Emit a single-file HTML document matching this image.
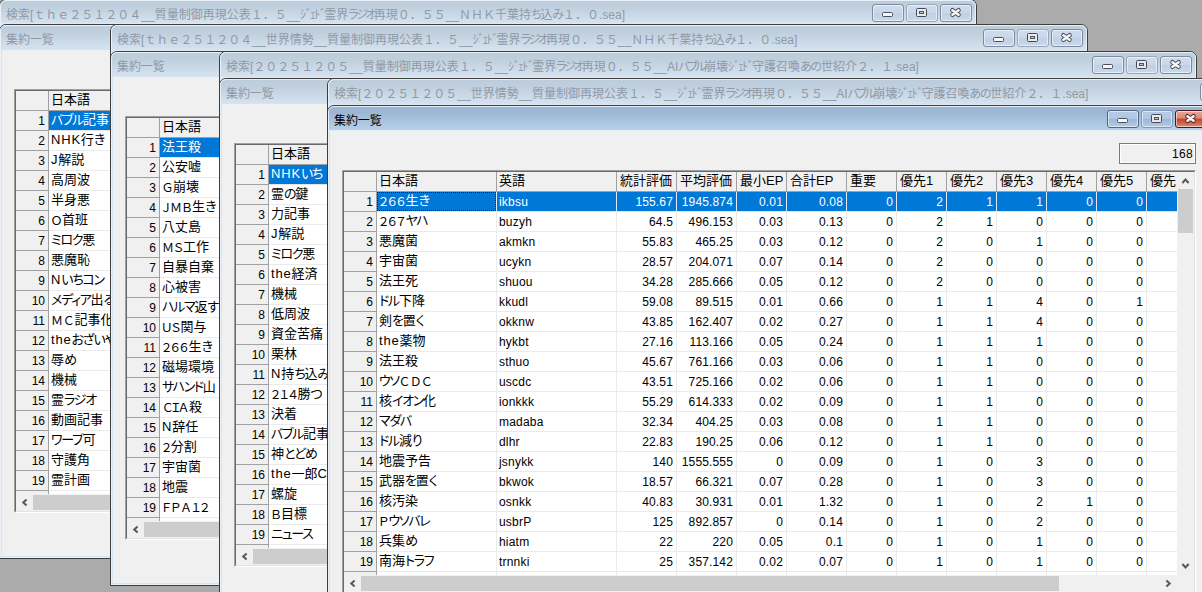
<!DOCTYPE html>
<html lang="ja"><head><meta charset="utf-8"><title>検索</title>
<style>
*{box-sizing:border-box;margin:0;padding:0}
html,body{width:1202px;height:592px;overflow:hidden}
body{background:#ababab;position:relative;font-family:"Liberation Sans","Noto Sans CJK JP",sans-serif;font-size:12px;color:#000}
.win{position:absolute;width:978px;border:1px solid #3d3d3d;border-radius:7px 7px 0 0;background:#d7e4f2;overflow:hidden}
.win .hl{position:absolute;left:0;top:0;right:0;bottom:0;border:1px solid #eaf0f8;border-radius:6px 6px 0 0;pointer-events:none}
.cap{position:absolute;left:0;right:0;top:0;background:linear-gradient(#bdccdb,#c0cfdd 30%,#d6e4f1);box-shadow:inset 0 -1px 0 #dfe9f4}
.cap .t{position:absolute;left:6px;white-space:nowrap;color:#9099a6;font-size:12px;line-height:16px}
.inner{position:absolute;left:-1px;right:-1px;bottom:-1px;border:1px solid #3d3d3d;border-radius:7px 7px 0 0;background:#d7e4f2;overflow:hidden}
.inner .cap2{position:absolute;left:0;right:0;top:0;height:25px;background:linear-gradient(#bdccdb,#c0cfdd 30%,#d6e4f1)}
.inner.act .cap2{background:linear-gradient(#9ab5d3,#9cb7d5 25%,#b9d2eb);box-shadow:inset 0 -1px 0 #e2ebf5}
.inner .cap2 .t{position:absolute;left:6px;top:7px;letter-spacing:-.1px;white-space:nowrap;color:#9099a6;font-size:12px;line-height:16px}
.inner.act .cap2 .t{color:#000}
.inner .cl{position:absolute;left:2px;right:2px;top:25px;bottom:2px;background:#f0f0f0}
.btn{position:absolute;width:32px;height:18px;border:1px solid #7d8aa0;border-radius:3px;background:linear-gradient(#cfdceb,#c9d7e8 50%,#c0d0e4 50%,#c9d8ea);box-shadow:inset 0 0 0 1px rgba(255,255,255,.55)}
.btn svg{position:absolute;left:-1px;top:-1px}
.btn.max{border-color:#9aa6b9}
.act .btn.max{border-color:#7f97b8}
.act .btn{border-color:#56657d;background:linear-gradient(#b7cce6,#afc6e2 50%,#9bb7d8 50%,#b3cbe6)}
.act .btn.x{border-color:#4a1a1a;background:linear-gradient(#e9a99b,#dc8573 45%,#c3452d 50%,#cf6a4f 80%,#dd907a)}
.grid{position:absolute;border-style:solid;border-width:2px;border-color:#a0a0a0 #fff #fff #a0a0a0;background:#fff;font-family:"Liberation Sans","Noto Sans CJK JP",sans-serif;font-size:13px}
.grid .in{position:absolute;left:-1px;top:-1px;right:-1px;bottom:-1px;border-style:solid;border-width:1px;border-color:#696969 #e3e3e3 #e3e3e3 #696969;overflow:hidden;background:#fff}
.r{position:absolute;left:0;height:20px;white-space:nowrap}
.c{position:absolute;top:0;height:20px;border-right:1px solid #ebebeb;border-bottom:1px solid #ebebeb;line-height:17px;padding:0 3px 0 2px;overflow:hidden;white-space:nowrap}
.c.n{text-align:right;padding-right:3px;font-size:12px;line-height:21px;letter-spacing:.15px}
.c.e{font-size:12px;line-height:21px;letter-spacing:.2px;padding-left:2px}
.h .c{background:#f0f0f0;border-right-color:#a0a0a0;border-bottom-color:#a0a0a0;line-height:18px}
.c.rh{background:#f0f0f0;border-right-color:#a0a0a0;border-bottom-color:#a0a0a0;text-align:right;padding-right:3px;font-size:12px;line-height:21px}
.sel .c{background:#0078d7;color:#fff;border-right-color:#dfeaf6;border-bottom-color:#e4e4e4}
.sel .c.rh{background:#f0f0f0;color:#000;border-right-color:#a0a0a0;border-bottom-color:#a0a0a0}
.foc:after{content:"";position:absolute;left:0;top:0;right:0;bottom:0;border:1px dotted #10243a}
.hs{position:absolute;left:0;height:17px;background:#f0f0f0}
.hs .th{position:absolute;top:1px;height:15px;background:#cdcdcd}
.vs{position:absolute;width:17px;background:#f0f0f0}
.vs .th{position:absolute;left:1px;width:15px;background:#cdcdcd}
.arr{position:absolute}
.kn{font-feature-settings:"palt";letter-spacing:-1.3px}
.fw{font-size:12px;position:relative;top:.5px}
.as{letter-spacing:.8px}
.tk{font-feature-settings:"palt";letter-spacing:-2.5px}
.th{font-feature-settings:"palt";letter-spacing:-1.2px}
.hk{letter-spacing:-1.95px}
.tb{position:absolute;border:1px solid #7a7a7a;background:#f0f0f0;box-shadow:inset 0 0 0 1px #fff;font-size:12px;text-align:right;line-height:21px;padding-right:2px;letter-spacing:.3px}
</style></head>
<body>
<div class="win" style="left:-1px;top:-1px;height:560px"><div class="cap" style="height:24px"><div class="t" style="top:7px">検索[ｔｈｅ２５１２０４__質量制御再現公表１．５__<span class="hk">ｼﾞｪﾄﾞ</span>霊界<span class="tk">ラジオ</span>再現０．５５__ＮＨＫ千葉持<span class="th">ち</span>込<span class="th">み</span>１．０.sea]</div></div><div class="btn min" style="left:872px;top:4px"><svg width="32" height="18" viewBox="0 0 32 18"><rect x="10.5" y="8.5" width="10" height="4" rx="1" fill="#f6f6f6" stroke="#4a505c"/></svg></div><div class="btn max" style="left:906px;top:4px"><svg width="32" height="18" viewBox="0 0 32 18"><rect x="10.5" y="4.5" width="10" height="8" rx="1" fill="#e9e9e9" stroke="#444a55"/><rect x="13.5" y="7.5" width="4" height="2" fill="#b9c9df" stroke="#4d5563"/></svg></div><div class="btn x" style="left:940px;top:4px"><svg width="32" height="18" viewBox="0 0 32 18"><path d="M12.4 6.2L18.6 10.8M18.6 6.2L12.4 10.8" fill="none" stroke="#4b505b" stroke-width="4.4" stroke-linecap="round"/><path d="M12.4 6.2L18.6 10.8M18.6 6.2L12.4 10.8" fill="none" stroke="#f8f8f8" stroke-width="2.5" stroke-linecap="round"/></svg></div><div class="hl"></div><div class="inner" style="top:24px"><div class="cap2"><div class="t">集約一覧</div></div><div class="cl"></div><div class="hl"></div><div class="grid" style="left:14px;top:64px;width:300px;height:424px"><div class="in"><div class="r h" style="top:0"><div class="c" style="left:0;width:33px"></div><div class="c" style="left:33px;width:120px">日本語</div><div class="c" style="left:153px;width:120px">英語</div></div><div class="r sel" style="top:20px"><div class="c rh" style="left:0;width:33px">1</div><div class="c" style="left:33px;width:120px"><span class="kn">バブル</span>記事</div><div class="c e" style="left:153px;width:120px"></div></div><div class="r" style="top:40px"><div class="c rh" style="left:0;width:33px">2</div><div class="c" style="left:33px;width:120px"><span class="as">NHK</span>行<span class="kn">き</span></div><div class="c e" style="left:153px;width:120px"></div></div><div class="r" style="top:60px"><div class="c rh" style="left:0;width:33px">3</div><div class="c" style="left:33px;width:120px"><span class="as">J</span>解説</div><div class="c e" style="left:153px;width:120px"></div></div><div class="r" style="top:80px"><div class="c rh" style="left:0;width:33px">4</div><div class="c" style="left:33px;width:120px">高周波</div><div class="c e" style="left:153px;width:120px"></div></div><div class="r" style="top:100px"><div class="c rh" style="left:0;width:33px">5</div><div class="c" style="left:33px;width:120px">半身悪</div><div class="c e" style="left:153px;width:120px"></div></div><div class="r" style="top:120px"><div class="c rh" style="left:0;width:33px">6</div><div class="c" style="left:33px;width:120px"><span class="fw" style="margin:0 -0.5px">Ｏ</span>首班</div><div class="c e" style="left:153px;width:120px"></div></div><div class="r" style="top:140px"><div class="c rh" style="left:0;width:33px">7</div><div class="c" style="left:33px;width:120px"><span class="kn">ミロク</span>悪</div><div class="c e" style="left:153px;width:120px"></div></div><div class="r" style="top:160px"><div class="c rh" style="left:0;width:33px">8</div><div class="c" style="left:33px;width:120px">悪魔恥</div><div class="c e" style="left:153px;width:120px"></div></div><div class="r" style="top:180px"><div class="c rh" style="left:0;width:33px">9</div><div class="c" style="left:33px;width:120px"><span class="as">N</span><span class="kn">いちコン</span></div><div class="c e" style="left:153px;width:120px"></div></div><div class="r" style="top:200px"><div class="c rh" style="left:0;width:33px">10</div><div class="c" style="left:33px;width:120px"><span class="kn">メディア</span>出<span class="kn">る</span></div><div class="c e" style="left:153px;width:120px"></div></div><div class="r" style="top:220px"><div class="c rh" style="left:0;width:33px">11</div><div class="c" style="left:33px;width:120px"><span class="fw" style="margin:0 0px">Ｍ</span><span class="fw" style="margin:0 -0.25px">Ｃ</span>記事化</div><div class="c e" style="left:153px;width:120px"></div></div><div class="r" style="top:240px"><div class="c rh" style="left:0;width:33px">12</div><div class="c" style="left:33px;width:120px"><span class="as">the</span><span class="kn">おざいや</span></div><div class="c e" style="left:153px;width:120px"></div></div><div class="r" style="top:260px"><div class="c rh" style="left:0;width:33px">13</div><div class="c" style="left:33px;width:120px">辱<span class="kn">め</span></div><div class="c e" style="left:153px;width:120px"></div></div><div class="r" style="top:280px"><div class="c rh" style="left:0;width:33px">14</div><div class="c" style="left:33px;width:120px">機械</div><div class="c e" style="left:153px;width:120px"></div></div><div class="r" style="top:300px"><div class="c rh" style="left:0;width:33px">15</div><div class="c" style="left:33px;width:120px">霊<span class="kn">ラジオ</span></div><div class="c e" style="left:153px;width:120px"></div></div><div class="r" style="top:320px"><div class="c rh" style="left:0;width:33px">16</div><div class="c" style="left:33px;width:120px">動画記事</div><div class="c e" style="left:153px;width:120px"></div></div><div class="r" style="top:340px"><div class="c rh" style="left:0;width:33px">17</div><div class="c" style="left:33px;width:120px"><span class="kn">ワープ</span>可</div><div class="c e" style="left:153px;width:120px"></div></div><div class="r" style="top:360px"><div class="c rh" style="left:0;width:33px">18</div><div class="c" style="left:33px;width:120px">守護角</div><div class="c e" style="left:153px;width:120px"></div></div><div class="r" style="top:380px"><div class="c rh" style="left:0;width:33px">19</div><div class="c" style="left:33px;width:120px">霊計画</div><div class="c e" style="left:153px;width:120px"></div></div><div class="r" style="top:400px"><div class="c rh" style="left:0;width:33px"></div><div class="c" style="left:33px;width:120px"></div><div class="c e" style="left:153px;width:120px"></div></div><div class="hs" style="top:403px;width:296px"><svg class="arr" style="left:0px;top:0px" width="17" height="17" viewBox="0 0 17 17"><path d="M10.6 5.5 L7.3 8.5 L10.6 11.5" fill="none" stroke="#5a5a5a" stroke-width="2.1"/></svg><div class="th" style="left:17px;width:200px"></div></div></div></div></div></div>
<div class="win" style="left:110px;top:24px;height:562px"><div class="cap" style="height:26px"><div class="t" style="top:7px">検索[ｔｈｅ２５１２０４__世界情勢__質量制御再現公表１．５__<span class="hk">ｼﾞｪﾄﾞ</span>霊界<span class="tk">ラジオ</span>再現０．５５__ＮＨＫ千葉持<span class="th">ち</span>込<span class="th">み</span>１．０.sea]</div></div><div class="btn min" style="left:872px;top:4px"><svg width="32" height="18" viewBox="0 0 32 18"><rect x="10.5" y="8.5" width="10" height="4" rx="1" fill="#f6f6f6" stroke="#4a505c"/></svg></div><div class="btn max" style="left:906px;top:4px"><svg width="32" height="18" viewBox="0 0 32 18"><rect x="10.5" y="4.5" width="10" height="8" rx="1" fill="#e9e9e9" stroke="#444a55"/><rect x="13.5" y="7.5" width="4" height="2" fill="#b9c9df" stroke="#4d5563"/></svg></div><div class="btn x" style="left:940px;top:4px"><svg width="32" height="18" viewBox="0 0 32 18"><path d="M12.4 6.2L18.6 10.8M18.6 6.2L12.4 10.8" fill="none" stroke="#4b505b" stroke-width="4.4" stroke-linecap="round"/><path d="M12.4 6.2L18.6 10.8M18.6 6.2L12.4 10.8" fill="none" stroke="#f8f8f8" stroke-width="2.5" stroke-linecap="round"/></svg></div><div class="hl"></div><div class="inner" style="top:26px"><div class="cap2"><div class="t">集約一覧</div></div><div class="cl"></div><div class="hl"></div><div class="grid" style="left:14px;top:64px;width:300px;height:424px"><div class="in"><div class="r h" style="top:0"><div class="c" style="left:0;width:33px"></div><div class="c" style="left:33px;width:120px">日本語</div><div class="c" style="left:153px;width:120px">英語</div></div><div class="r sel" style="top:20px"><div class="c rh" style="left:0;width:33px">1</div><div class="c" style="left:33px;width:120px">法王殺</div><div class="c e" style="left:153px;width:120px"></div></div><div class="r" style="top:40px"><div class="c rh" style="left:0;width:33px">2</div><div class="c" style="left:33px;width:120px">公安嘘</div><div class="c e" style="left:153px;width:120px"></div></div><div class="r" style="top:60px"><div class="c rh" style="left:0;width:33px">3</div><div class="c" style="left:33px;width:120px"><span class="fw" style="margin:0 -0.5px">Ｇ</span>崩壊</div><div class="c e" style="left:153px;width:120px"></div></div><div class="r" style="top:80px"><div class="c rh" style="left:0;width:33px">4</div><div class="c" style="left:33px;width:120px"><span class="fw" style="margin:0 -2px">Ｊ</span><span class="fw" style="margin:0 0px">Ｍ</span><span class="fw" style="margin:0 -1px">Ｂ</span>生<span class="kn">き</span></div><div class="c e" style="left:153px;width:120px"></div></div><div class="r" style="top:100px"><div class="c rh" style="left:0;width:33px">5</div><div class="c" style="left:33px;width:120px">八丈島</div><div class="c e" style="left:153px;width:120px"></div></div><div class="r" style="top:120px"><div class="c rh" style="left:0;width:33px">6</div><div class="c" style="left:33px;width:120px"><span class="fw" style="margin:0 0px">Ｍ</span><span class="fw" style="margin:0 -1.5px">Ｓ</span>工作</div><div class="c e" style="left:153px;width:120px"></div></div><div class="r" style="top:140px"><div class="c rh" style="left:0;width:33px">7</div><div class="c" style="left:33px;width:120px">自暴自棄</div><div class="c e" style="left:153px;width:120px"></div></div><div class="r" style="top:160px"><div class="c rh" style="left:0;width:33px">8</div><div class="c" style="left:33px;width:120px">心被害</div><div class="c e" style="left:153px;width:120px"></div></div><div class="r" style="top:180px"><div class="c rh" style="left:0;width:33px">9</div><div class="c" style="left:33px;width:120px"><span class="kn">ハルマ</span>返<span class="kn">す</span></div><div class="c e" style="left:153px;width:120px"></div></div><div class="r" style="top:200px"><div class="c rh" style="left:0;width:33px">10</div><div class="c" style="left:33px;width:120px"><span class="fw" style="margin:0 -1.25px">Ｕ</span><span class="fw" style="margin:0 -1.5px">Ｓ</span>関与</div><div class="c e" style="left:153px;width:120px"></div></div><div class="r" style="top:220px"><div class="c rh" style="left:0;width:33px">11</div><div class="c" style="left:33px;width:120px"><span class="fw" style="margin:0 -1.6px">２</span><span class="fw" style="margin:0 -1.6px">６</span><span class="fw" style="margin:0 -1.6px">６</span>生<span class="kn">き</span></div><div class="c e" style="left:153px;width:120px"></div></div><div class="r" style="top:240px"><div class="c rh" style="left:0;width:33px">12</div><div class="c" style="left:33px;width:120px">磁場環境</div><div class="c e" style="left:153px;width:120px"></div></div><div class="r" style="top:260px"><div class="c rh" style="left:0;width:33px">13</div><div class="c" style="left:33px;width:120px"><span class="kn">サハンド</span>山</div><div class="c e" style="left:153px;width:120px"></div></div><div class="r" style="top:280px"><div class="c rh" style="left:0;width:33px">14</div><div class="c" style="left:33px;width:120px"><span class="fw" style="margin:0 -0.25px">Ｃ</span><span class="fw" style="margin:0 -3.75px">Ｉ</span><span class="fw" style="margin:0 -0.5px">Ａ</span>殺</div><div class="c e" style="left:153px;width:120px"></div></div><div class="r" style="top:300px"><div class="c rh" style="left:0;width:33px">15</div><div class="c" style="left:33px;width:120px"><span class="as">N</span>辞任</div><div class="c e" style="left:153px;width:120px"></div></div><div class="r" style="top:320px"><div class="c rh" style="left:0;width:33px">16</div><div class="c" style="left:33px;width:120px"><span class="fw" style="margin:0 -1.6px">２</span>分割</div><div class="c e" style="left:153px;width:120px"></div></div><div class="r" style="top:340px"><div class="c rh" style="left:0;width:33px">17</div><div class="c" style="left:33px;width:120px">宇宙菌</div><div class="c e" style="left:153px;width:120px"></div></div><div class="r" style="top:360px"><div class="c rh" style="left:0;width:33px">18</div><div class="c" style="left:33px;width:120px">地震</div><div class="c e" style="left:153px;width:120px"></div></div><div class="r" style="top:380px"><div class="c rh" style="left:0;width:33px">19</div><div class="c" style="left:33px;width:120px"><span class="fw" style="margin:0 -1.5px">Ｆ</span><span class="fw" style="margin:0 -1.25px">Ｐ</span><span class="fw" style="margin:0 -0.5px">Ａ</span><span class="fw" style="margin:0 -1.6px">１</span><span class="fw" style="margin:0 -1.6px">２</span></div><div class="c e" style="left:153px;width:120px"></div></div><div class="r" style="top:400px"><div class="c rh" style="left:0;width:33px"></div><div class="c" style="left:33px;width:120px"></div><div class="c e" style="left:153px;width:120px"></div></div><div class="hs" style="top:403px;width:296px"><svg class="arr" style="left:0px;top:0px" width="17" height="17" viewBox="0 0 17 17"><path d="M10.6 5.5 L7.3 8.5 L10.6 11.5" fill="none" stroke="#5a5a5a" stroke-width="2.1"/></svg><div class="th" style="left:17px;width:200px"></div></div></div></div></div></div>
<div class="win" style="left:219px;top:51px;height:562px"><div class="cap" style="height:26px"><div class="t" style="top:7px">検索[２０２５１２０５__質量制御再現公表１．５__<span class="hk">ｼﾞｪﾄﾞ</span>霊界<span class="tk">ラジオ</span>再現０．５５__AI<span class="tk">バブル</span>崩壊<span class="hk">ｼﾞｪﾄﾞ</span>守護召喚<span class="th">あの</span>世紹介２．１.sea]</div></div><div class="btn min" style="left:872px;top:4px"><svg width="32" height="18" viewBox="0 0 32 18"><rect x="10.5" y="8.5" width="10" height="4" rx="1" fill="#f6f6f6" stroke="#4a505c"/></svg></div><div class="btn max" style="left:906px;top:4px"><svg width="32" height="18" viewBox="0 0 32 18"><rect x="10.5" y="4.5" width="10" height="8" rx="1" fill="#e9e9e9" stroke="#444a55"/><rect x="13.5" y="7.5" width="4" height="2" fill="#b9c9df" stroke="#4d5563"/></svg></div><div class="btn x" style="left:940px;top:4px"><svg width="32" height="18" viewBox="0 0 32 18"><path d="M12.4 6.2L18.6 10.8M18.6 6.2L12.4 10.8" fill="none" stroke="#4b505b" stroke-width="4.4" stroke-linecap="round"/><path d="M12.4 6.2L18.6 10.8M18.6 6.2L12.4 10.8" fill="none" stroke="#f8f8f8" stroke-width="2.5" stroke-linecap="round"/></svg></div><div class="hl"></div><div class="inner" style="top:26px"><div class="cap2"><div class="t">集約一覧</div></div><div class="cl"></div><div class="hl"></div><div class="grid" style="left:14px;top:64px;width:300px;height:424px"><div class="in"><div class="r h" style="top:0"><div class="c" style="left:0;width:33px"></div><div class="c" style="left:33px;width:120px">日本語</div><div class="c" style="left:153px;width:120px">英語</div></div><div class="r sel" style="top:20px"><div class="c rh" style="left:0;width:33px">1</div><div class="c" style="left:33px;width:120px"><span class="as">NHK</span><span class="kn">いち</span></div><div class="c e" style="left:153px;width:120px"></div></div><div class="r" style="top:40px"><div class="c rh" style="left:0;width:33px">2</div><div class="c" style="left:33px;width:120px">霊<span class="kn">の</span>鍵</div><div class="c e" style="left:153px;width:120px"></div></div><div class="r" style="top:60px"><div class="c rh" style="left:0;width:33px">3</div><div class="c" style="left:33px;width:120px">力記事</div><div class="c e" style="left:153px;width:120px"></div></div><div class="r" style="top:80px"><div class="c rh" style="left:0;width:33px">4</div><div class="c" style="left:33px;width:120px"><span class="as">J</span>解説</div><div class="c e" style="left:153px;width:120px"></div></div><div class="r" style="top:100px"><div class="c rh" style="left:0;width:33px">5</div><div class="c" style="left:33px;width:120px"><span class="kn">ミロク</span>悪</div><div class="c e" style="left:153px;width:120px"></div></div><div class="r" style="top:120px"><div class="c rh" style="left:0;width:33px">6</div><div class="c" style="left:33px;width:120px"><span class="as">the</span>経済</div><div class="c e" style="left:153px;width:120px"></div></div><div class="r" style="top:140px"><div class="c rh" style="left:0;width:33px">7</div><div class="c" style="left:33px;width:120px">機械</div><div class="c e" style="left:153px;width:120px"></div></div><div class="r" style="top:160px"><div class="c rh" style="left:0;width:33px">8</div><div class="c" style="left:33px;width:120px">低周波</div><div class="c e" style="left:153px;width:120px"></div></div><div class="r" style="top:180px"><div class="c rh" style="left:0;width:33px">9</div><div class="c" style="left:33px;width:120px">資金苦痛</div><div class="c e" style="left:153px;width:120px"></div></div><div class="r" style="top:200px"><div class="c rh" style="left:0;width:33px">10</div><div class="c" style="left:33px;width:120px">栗林</div><div class="c e" style="left:153px;width:120px"></div></div><div class="r" style="top:220px"><div class="c rh" style="left:0;width:33px">11</div><div class="c" style="left:33px;width:120px"><span class="as">N</span>持<span class="kn">ち</span>込<span class="kn">み</span></div><div class="c e" style="left:153px;width:120px"></div></div><div class="r" style="top:240px"><div class="c rh" style="left:0;width:33px">12</div><div class="c" style="left:33px;width:120px"><span class="fw" style="margin:0 -1.6px">２</span><span class="fw" style="margin:0 -1.6px">１</span><span class="fw" style="margin:0 -1.6px">４</span>勝<span class="kn">つ</span></div><div class="c e" style="left:153px;width:120px"></div></div><div class="r" style="top:260px"><div class="c rh" style="left:0;width:33px">13</div><div class="c" style="left:33px;width:120px">決着</div><div class="c e" style="left:153px;width:120px"></div></div><div class="r" style="top:280px"><div class="c rh" style="left:0;width:33px">14</div><div class="c" style="left:33px;width:120px"><span class="kn">バブル</span>記事</div><div class="c e" style="left:153px;width:120px"></div></div><div class="r" style="top:300px"><div class="c rh" style="left:0;width:33px">15</div><div class="c" style="left:33px;width:120px">神<span class="kn">とどめ</span></div><div class="c e" style="left:153px;width:120px"></div></div><div class="r" style="top:320px"><div class="c rh" style="left:0;width:33px">16</div><div class="c" style="left:33px;width:120px"><span class="as">the</span>一郎<span class="as">C</span></div><div class="c e" style="left:153px;width:120px"></div></div><div class="r" style="top:340px"><div class="c rh" style="left:0;width:33px">17</div><div class="c" style="left:33px;width:120px">螺旋</div><div class="c e" style="left:153px;width:120px"></div></div><div class="r" style="top:360px"><div class="c rh" style="left:0;width:33px">18</div><div class="c" style="left:33px;width:120px"><span class="fw" style="margin:0 -1px">Ｂ</span>目標</div><div class="c e" style="left:153px;width:120px"></div></div><div class="r" style="top:380px"><div class="c rh" style="left:0;width:33px">19</div><div class="c" style="left:33px;width:120px"><span class="kn">ニュース</span></div><div class="c e" style="left:153px;width:120px"></div></div><div class="r" style="top:400px"><div class="c rh" style="left:0;width:33px"></div><div class="c" style="left:33px;width:120px"></div><div class="c e" style="left:153px;width:120px"></div></div><div class="hs" style="top:403px;width:296px"><svg class="arr" style="left:0px;top:0px" width="17" height="17" viewBox="0 0 17 17"><path d="M10.6 5.5 L7.3 8.5 L10.6 11.5" fill="none" stroke="#5a5a5a" stroke-width="2.1"/></svg><div class="th" style="left:17px;width:200px"></div></div></div></div></div></div>
<div class="win" style="left:327px;top:78px;height:562px"><div class="cap" style="height:26px"><div class="t" style="top:7px">検索[２０２５１２０５__世界情勢__質量制御再現公表１．５__<span class="hk">ｼﾞｪﾄﾞ</span>霊界<span class="tk">ラジオ</span>再現０．５５__AI<span class="tk">バブル</span>崩壊<span class="hk">ｼﾞｪﾄﾞ</span>守護召喚<span class="th">あの</span>世紹介２．１.sea]</div></div><div class="btn min" style="left:872px;top:4px"><svg width="32" height="18" viewBox="0 0 32 18"><rect x="10.5" y="8.5" width="10" height="4" rx="1" fill="#f6f6f6" stroke="#4a505c"/></svg></div><div class="btn max" style="left:906px;top:4px"><svg width="32" height="18" viewBox="0 0 32 18"><rect x="10.5" y="4.5" width="10" height="8" rx="1" fill="#e9e9e9" stroke="#444a55"/><rect x="13.5" y="7.5" width="4" height="2" fill="#b9c9df" stroke="#4d5563"/></svg></div><div class="btn x" style="left:940px;top:4px"><svg width="32" height="18" viewBox="0 0 32 18"><path d="M12.4 6.2L18.6 10.8M18.6 6.2L12.4 10.8" fill="none" stroke="#4b505b" stroke-width="4.4" stroke-linecap="round"/><path d="M12.4 6.2L18.6 10.8M18.6 6.2L12.4 10.8" fill="none" stroke="#f8f8f8" stroke-width="2.5" stroke-linecap="round"/></svg></div><div class="hl"></div><div class="inner act" style="top:26px"><div class="cap2"><div class="t">集約一覧</div></div><div class="cl"></div><div class="hl"></div><div class="btn min" style="left:779px;top:4px"><svg width="32" height="18" viewBox="0 0 32 18"><rect x="10.5" y="8.5" width="10" height="4" rx="1" fill="#f6f6f6" stroke="#4a505c"/></svg></div><div class="btn max" style="left:813px;top:4px"><svg width="32" height="18" viewBox="0 0 32 18"><rect x="10.5" y="4.5" width="10" height="8" rx="1" fill="#e9e9e9" stroke="#444a55"/><rect x="13.5" y="7.5" width="4" height="2" fill="#b9c9df" stroke="#4d5563"/></svg></div><div class="btn x" style="left:847px;top:4px"><svg width="32" height="18" viewBox="0 0 32 18"><path d="M12.4 6.2L18.6 10.8M18.6 6.2L12.4 10.8" fill="none" stroke="#54292a" stroke-width="4.4" stroke-linecap="round"/><path d="M12.4 6.2L18.6 10.8M18.6 6.2L12.4 10.8" fill="none" stroke="#f8f8f8" stroke-width="2.5" stroke-linecap="round"/></svg></div><div class="tb" style="left:791px;top:37px;width:77px;height:21px">168</div><div class="grid" style="left:14px;top:64px;width:854px;height:424px"><div class="in"><div class="r h" style="top:0"><div class="c" style="left:0px;width:33px"></div><div class="c" style="left:33px;width:120px">日本語</div><div class="c" style="left:153px;width:120px">英語</div><div class="c" style="left:273px;width:60px;padding-left:3px">統計評価</div><div class="c" style="left:333px;width:60px;padding-left:3px">平均評価</div><div class="c" style="left:393px;width:50px;padding-left:3px">最小EP</div><div class="c" style="left:443px;width:60px;padding-left:3px">合計EP</div><div class="c" style="left:503px;width:50px;padding-left:3px">重要</div><div class="c" style="left:553px;width:50px;padding-left:3px">優先1</div><div class="c" style="left:603px;width:50px;padding-left:3px">優先2</div><div class="c" style="left:653px;width:50px;padding-left:3px">優先3</div><div class="c" style="left:703px;width:50px;padding-left:3px">優先4</div><div class="c" style="left:753px;width:50px;padding-left:3px">優先5</div><div class="c" style="left:803px;width:50px;padding-left:3px">優先<span style="margin-left:3px">6</span></div></div><div class="r sel" style="top:20px"><div class="c rh" style="left:0px;width:33px">1</div><div class="c  foc" style="left:33px;width:120px"><span class="fw" style="margin:0 -1.6px">２</span><span class="fw" style="margin:0 -1.6px">６</span><span class="fw" style="margin:0 -1.6px">６</span>生<span class="kn">き</span></div><div class="c e" style="left:153px;width:120px">ikbsu</div><div class="c n" style="left:273px;width:60px">155.67</div><div class="c n" style="left:333px;width:60px">1945.874</div><div class="c n" style="left:393px;width:50px">0.01</div><div class="c n" style="left:443px;width:60px">0.08</div><div class="c n" style="left:503px;width:50px">0</div><div class="c n" style="left:553px;width:50px">2</div><div class="c n" style="left:603px;width:50px">1</div><div class="c n" style="left:653px;width:50px">1</div><div class="c n" style="left:703px;width:50px">0</div><div class="c n" style="left:753px;width:50px">0</div><div class="c n" style="left:803px;width:50px"></div></div><div class="r" style="top:40px"><div class="c rh" style="left:0px;width:33px">2</div><div class="c" style="left:33px;width:120px"><span class="fw" style="margin:0 -1.6px">２</span><span class="fw" style="margin:0 -1.6px">６</span><span class="fw" style="margin:0 -1.6px">７</span><span class="kn">ヤハ</span></div><div class="c e" style="left:153px;width:120px">buzyh</div><div class="c n" style="left:273px;width:60px">64.5</div><div class="c n" style="left:333px;width:60px">496.153</div><div class="c n" style="left:393px;width:50px">0.03</div><div class="c n" style="left:443px;width:60px">0.13</div><div class="c n" style="left:503px;width:50px">0</div><div class="c n" style="left:553px;width:50px">2</div><div class="c n" style="left:603px;width:50px">1</div><div class="c n" style="left:653px;width:50px">0</div><div class="c n" style="left:703px;width:50px">0</div><div class="c n" style="left:753px;width:50px">0</div><div class="c n" style="left:803px;width:50px"></div></div><div class="r" style="top:60px"><div class="c rh" style="left:0px;width:33px">3</div><div class="c" style="left:33px;width:120px">悪魔菌</div><div class="c e" style="left:153px;width:120px">akmkn</div><div class="c n" style="left:273px;width:60px">55.83</div><div class="c n" style="left:333px;width:60px">465.25</div><div class="c n" style="left:393px;width:50px">0.03</div><div class="c n" style="left:443px;width:60px">0.12</div><div class="c n" style="left:503px;width:50px">0</div><div class="c n" style="left:553px;width:50px">2</div><div class="c n" style="left:603px;width:50px">0</div><div class="c n" style="left:653px;width:50px">1</div><div class="c n" style="left:703px;width:50px">0</div><div class="c n" style="left:753px;width:50px">0</div><div class="c n" style="left:803px;width:50px"></div></div><div class="r" style="top:80px"><div class="c rh" style="left:0px;width:33px">4</div><div class="c" style="left:33px;width:120px">宇宙菌</div><div class="c e" style="left:153px;width:120px">ucykn</div><div class="c n" style="left:273px;width:60px">28.57</div><div class="c n" style="left:333px;width:60px">204.071</div><div class="c n" style="left:393px;width:50px">0.07</div><div class="c n" style="left:443px;width:60px">0.14</div><div class="c n" style="left:503px;width:50px">0</div><div class="c n" style="left:553px;width:50px">2</div><div class="c n" style="left:603px;width:50px">0</div><div class="c n" style="left:653px;width:50px">0</div><div class="c n" style="left:703px;width:50px">0</div><div class="c n" style="left:753px;width:50px">0</div><div class="c n" style="left:803px;width:50px"></div></div><div class="r" style="top:100px"><div class="c rh" style="left:0px;width:33px">5</div><div class="c" style="left:33px;width:120px">法王死</div><div class="c e" style="left:153px;width:120px">shuou</div><div class="c n" style="left:273px;width:60px">34.28</div><div class="c n" style="left:333px;width:60px">285.666</div><div class="c n" style="left:393px;width:50px">0.05</div><div class="c n" style="left:443px;width:60px">0.12</div><div class="c n" style="left:503px;width:50px">0</div><div class="c n" style="left:553px;width:50px">2</div><div class="c n" style="left:603px;width:50px">0</div><div class="c n" style="left:653px;width:50px">0</div><div class="c n" style="left:703px;width:50px">0</div><div class="c n" style="left:753px;width:50px">0</div><div class="c n" style="left:803px;width:50px"></div></div><div class="r" style="top:120px"><div class="c rh" style="left:0px;width:33px">6</div><div class="c" style="left:33px;width:120px"><span class="kn">ドル</span>下降</div><div class="c e" style="left:153px;width:120px">kkudl</div><div class="c n" style="left:273px;width:60px">59.08</div><div class="c n" style="left:333px;width:60px">89.515</div><div class="c n" style="left:393px;width:50px">0.01</div><div class="c n" style="left:443px;width:60px">0.66</div><div class="c n" style="left:503px;width:50px">0</div><div class="c n" style="left:553px;width:50px">1</div><div class="c n" style="left:603px;width:50px">1</div><div class="c n" style="left:653px;width:50px">4</div><div class="c n" style="left:703px;width:50px">0</div><div class="c n" style="left:753px;width:50px">1</div><div class="c n" style="left:803px;width:50px"></div></div><div class="r" style="top:140px"><div class="c rh" style="left:0px;width:33px">7</div><div class="c" style="left:33px;width:120px">剣<span class="kn">を</span>置<span class="kn">く</span></div><div class="c e" style="left:153px;width:120px">okknw</div><div class="c n" style="left:273px;width:60px">43.85</div><div class="c n" style="left:333px;width:60px">162.407</div><div class="c n" style="left:393px;width:50px">0.02</div><div class="c n" style="left:443px;width:60px">0.27</div><div class="c n" style="left:503px;width:50px">0</div><div class="c n" style="left:553px;width:50px">1</div><div class="c n" style="left:603px;width:50px">1</div><div class="c n" style="left:653px;width:50px">4</div><div class="c n" style="left:703px;width:50px">0</div><div class="c n" style="left:753px;width:50px">0</div><div class="c n" style="left:803px;width:50px"></div></div><div class="r" style="top:160px"><div class="c rh" style="left:0px;width:33px">8</div><div class="c" style="left:33px;width:120px"><span class="as">the</span>薬物</div><div class="c e" style="left:153px;width:120px">hykbt</div><div class="c n" style="left:273px;width:60px">27.16</div><div class="c n" style="left:333px;width:60px">113.166</div><div class="c n" style="left:393px;width:50px">0.05</div><div class="c n" style="left:443px;width:60px">0.24</div><div class="c n" style="left:503px;width:50px">0</div><div class="c n" style="left:553px;width:50px">1</div><div class="c n" style="left:603px;width:50px">1</div><div class="c n" style="left:653px;width:50px">1</div><div class="c n" style="left:703px;width:50px">0</div><div class="c n" style="left:753px;width:50px">0</div><div class="c n" style="left:803px;width:50px"></div></div><div class="r" style="top:180px"><div class="c rh" style="left:0px;width:33px">9</div><div class="c" style="left:33px;width:120px">法王殺</div><div class="c e" style="left:153px;width:120px">sthuo</div><div class="c n" style="left:273px;width:60px">45.67</div><div class="c n" style="left:333px;width:60px">761.166</div><div class="c n" style="left:393px;width:50px">0.03</div><div class="c n" style="left:443px;width:60px">0.06</div><div class="c n" style="left:503px;width:50px">0</div><div class="c n" style="left:553px;width:50px">1</div><div class="c n" style="left:603px;width:50px">1</div><div class="c n" style="left:653px;width:50px">0</div><div class="c n" style="left:703px;width:50px">0</div><div class="c n" style="left:753px;width:50px">0</div><div class="c n" style="left:803px;width:50px"></div></div><div class="r" style="top:200px"><div class="c rh" style="left:0px;width:33px">10</div><div class="c" style="left:33px;width:120px"><span class="kn">ウソ</span><span class="fw" style="margin:0 -0.25px">Ｃ</span><span class="fw" style="margin:0 -0.75px">Ｄ</span><span class="fw" style="margin:0 -0.25px">Ｃ</span></div><div class="c e" style="left:153px;width:120px">uscdc</div><div class="c n" style="left:273px;width:60px">43.51</div><div class="c n" style="left:333px;width:60px">725.166</div><div class="c n" style="left:393px;width:50px">0.02</div><div class="c n" style="left:443px;width:60px">0.06</div><div class="c n" style="left:503px;width:50px">0</div><div class="c n" style="left:553px;width:50px">1</div><div class="c n" style="left:603px;width:50px">1</div><div class="c n" style="left:653px;width:50px">0</div><div class="c n" style="left:703px;width:50px">0</div><div class="c n" style="left:753px;width:50px">0</div><div class="c n" style="left:803px;width:50px"></div></div><div class="r" style="top:220px"><div class="c rh" style="left:0px;width:33px">11</div><div class="c" style="left:33px;width:120px">核<span class="kn">イオン</span>化</div><div class="c e" style="left:153px;width:120px">ionkkk</div><div class="c n" style="left:273px;width:60px">55.29</div><div class="c n" style="left:333px;width:60px">614.333</div><div class="c n" style="left:393px;width:50px">0.02</div><div class="c n" style="left:443px;width:60px">0.09</div><div class="c n" style="left:503px;width:50px">0</div><div class="c n" style="left:553px;width:50px">1</div><div class="c n" style="left:603px;width:50px">1</div><div class="c n" style="left:653px;width:50px">0</div><div class="c n" style="left:703px;width:50px">0</div><div class="c n" style="left:753px;width:50px">0</div><div class="c n" style="left:803px;width:50px"></div></div><div class="r" style="top:240px"><div class="c rh" style="left:0px;width:33px">12</div><div class="c" style="left:33px;width:120px"><span class="kn">マダバ</span></div><div class="c e" style="left:153px;width:120px">madaba</div><div class="c n" style="left:273px;width:60px">32.34</div><div class="c n" style="left:333px;width:60px">404.25</div><div class="c n" style="left:393px;width:50px">0.03</div><div class="c n" style="left:443px;width:60px">0.08</div><div class="c n" style="left:503px;width:50px">0</div><div class="c n" style="left:553px;width:50px">1</div><div class="c n" style="left:603px;width:50px">1</div><div class="c n" style="left:653px;width:50px">0</div><div class="c n" style="left:703px;width:50px">0</div><div class="c n" style="left:753px;width:50px">0</div><div class="c n" style="left:803px;width:50px"></div></div><div class="r" style="top:260px"><div class="c rh" style="left:0px;width:33px">13</div><div class="c" style="left:33px;width:120px"><span class="kn">ドル</span>減<span class="kn">り</span></div><div class="c e" style="left:153px;width:120px">dlhr</div><div class="c n" style="left:273px;width:60px">22.83</div><div class="c n" style="left:333px;width:60px">190.25</div><div class="c n" style="left:393px;width:50px">0.06</div><div class="c n" style="left:443px;width:60px">0.12</div><div class="c n" style="left:503px;width:50px">0</div><div class="c n" style="left:553px;width:50px">1</div><div class="c n" style="left:603px;width:50px">1</div><div class="c n" style="left:653px;width:50px">0</div><div class="c n" style="left:703px;width:50px">0</div><div class="c n" style="left:753px;width:50px">0</div><div class="c n" style="left:803px;width:50px"></div></div><div class="r" style="top:280px"><div class="c rh" style="left:0px;width:33px">14</div><div class="c" style="left:33px;width:120px">地震予告</div><div class="c e" style="left:153px;width:120px">jsnykk</div><div class="c n" style="left:273px;width:60px">140</div><div class="c n" style="left:333px;width:60px">1555.555</div><div class="c n" style="left:393px;width:50px">0</div><div class="c n" style="left:443px;width:60px">0.09</div><div class="c n" style="left:503px;width:50px">0</div><div class="c n" style="left:553px;width:50px">1</div><div class="c n" style="left:603px;width:50px">0</div><div class="c n" style="left:653px;width:50px">3</div><div class="c n" style="left:703px;width:50px">0</div><div class="c n" style="left:753px;width:50px">0</div><div class="c n" style="left:803px;width:50px"></div></div><div class="r" style="top:300px"><div class="c rh" style="left:0px;width:33px">15</div><div class="c" style="left:33px;width:120px">武器<span class="kn">を</span>置<span class="kn">く</span></div><div class="c e" style="left:153px;width:120px">bkwok</div><div class="c n" style="left:273px;width:60px">18.57</div><div class="c n" style="left:333px;width:60px">66.321</div><div class="c n" style="left:393px;width:50px">0.07</div><div class="c n" style="left:443px;width:60px">0.28</div><div class="c n" style="left:503px;width:50px">0</div><div class="c n" style="left:553px;width:50px">1</div><div class="c n" style="left:603px;width:50px">0</div><div class="c n" style="left:653px;width:50px">3</div><div class="c n" style="left:703px;width:50px">0</div><div class="c n" style="left:753px;width:50px">0</div><div class="c n" style="left:803px;width:50px"></div></div><div class="r" style="top:320px"><div class="c rh" style="left:0px;width:33px">16</div><div class="c" style="left:33px;width:120px">核汚染</div><div class="c e" style="left:153px;width:120px">osnkk</div><div class="c n" style="left:273px;width:60px">40.83</div><div class="c n" style="left:333px;width:60px">30.931</div><div class="c n" style="left:393px;width:50px">0.01</div><div class="c n" style="left:443px;width:60px">1.32</div><div class="c n" style="left:503px;width:50px">0</div><div class="c n" style="left:553px;width:50px">1</div><div class="c n" style="left:603px;width:50px">0</div><div class="c n" style="left:653px;width:50px">2</div><div class="c n" style="left:703px;width:50px">1</div><div class="c n" style="left:753px;width:50px">0</div><div class="c n" style="left:803px;width:50px"></div></div><div class="r" style="top:340px"><div class="c rh" style="left:0px;width:33px">17</div><div class="c" style="left:33px;width:120px"><span class="fw" style="margin:0 -1.25px">Ｐ</span><span class="kn">ウソバレ</span></div><div class="c e" style="left:153px;width:120px">usbrP</div><div class="c n" style="left:273px;width:60px">125</div><div class="c n" style="left:333px;width:60px">892.857</div><div class="c n" style="left:393px;width:50px">0</div><div class="c n" style="left:443px;width:60px">0.14</div><div class="c n" style="left:503px;width:50px">0</div><div class="c n" style="left:553px;width:50px">1</div><div class="c n" style="left:603px;width:50px">0</div><div class="c n" style="left:653px;width:50px">2</div><div class="c n" style="left:703px;width:50px">0</div><div class="c n" style="left:753px;width:50px">0</div><div class="c n" style="left:803px;width:50px"></div></div><div class="r" style="top:360px"><div class="c rh" style="left:0px;width:33px">18</div><div class="c" style="left:33px;width:120px">兵集<span class="kn">め</span></div><div class="c e" style="left:153px;width:120px">hiatm</div><div class="c n" style="left:273px;width:60px">22</div><div class="c n" style="left:333px;width:60px">220</div><div class="c n" style="left:393px;width:50px">0.05</div><div class="c n" style="left:443px;width:60px">0.1</div><div class="c n" style="left:503px;width:50px">0</div><div class="c n" style="left:553px;width:50px">1</div><div class="c n" style="left:603px;width:50px">0</div><div class="c n" style="left:653px;width:50px">1</div><div class="c n" style="left:703px;width:50px">0</div><div class="c n" style="left:753px;width:50px">0</div><div class="c n" style="left:803px;width:50px"></div></div><div class="r" style="top:380px"><div class="c rh" style="left:0px;width:33px">19</div><div class="c" style="left:33px;width:120px">南海<span class="kn">トラフ</span></div><div class="c e" style="left:153px;width:120px">trnnki</div><div class="c n" style="left:273px;width:60px">25</div><div class="c n" style="left:333px;width:60px">357.142</div><div class="c n" style="left:393px;width:50px">0.02</div><div class="c n" style="left:443px;width:60px">0.07</div><div class="c n" style="left:503px;width:50px">0</div><div class="c n" style="left:553px;width:50px">1</div><div class="c n" style="left:603px;width:50px">0</div><div class="c n" style="left:653px;width:50px">1</div><div class="c n" style="left:703px;width:50px">0</div><div class="c n" style="left:753px;width:50px">0</div><div class="c n" style="left:803px;width:50px"></div></div><div class="r" style="top:400px"><div class="c rh" style="left:0px;width:33px"></div><div class="c" style="left:33px;width:120px"></div><div class="c e" style="left:153px;width:120px"></div><div class="c n" style="left:273px;width:60px"></div><div class="c n" style="left:333px;width:60px"></div><div class="c n" style="left:393px;width:50px"></div><div class="c n" style="left:443px;width:60px"></div><div class="c n" style="left:503px;width:50px"></div><div class="c n" style="left:553px;width:50px"></div><div class="c n" style="left:603px;width:50px"></div><div class="c n" style="left:653px;width:50px"></div><div class="c n" style="left:703px;width:50px"></div><div class="c n" style="left:753px;width:50px"></div><div class="c n" style="left:803px;width:50px"></div></div><div class="vs" style="left:833px;top:0;height:403px"><svg class="arr" style="left:0px;top:0px" width="17" height="17" viewBox="0 0 17 17"><path d="M5.4 11 L8.5 7.6 L11.6 11" fill="none" stroke="#5a5a5a" stroke-width="2.1"/></svg><div class="th" style="top:17px;height:44px"></div><svg class="arr" style="left:0px;top:386px" width="17" height="17" viewBox="0 0 17 17"><path d="M5.4 6 L8.5 9.4 L11.6 6" fill="none" stroke="#5a5a5a" stroke-width="2.1"/></svg></div><div class="hs" style="top:403px;width:850px"><svg class="arr" style="left:0px;top:0px" width="17" height="17" viewBox="0 0 17 17"><path d="M10.6 5.5 L7.3 8.5 L10.6 11.5" fill="none" stroke="#5a5a5a" stroke-width="2.1"/></svg><div class="th" style="left:17px;width:698px"></div><svg class="arr" style="left:816px;top:0px" width="17" height="17" viewBox="0 0 17 17"><path d="M6.4 5.5 L9.7 8.5 L6.4 11.5" fill="none" stroke="#5a5a5a" stroke-width="2.1"/></svg></div></div></div></div></div>
</body></html>
